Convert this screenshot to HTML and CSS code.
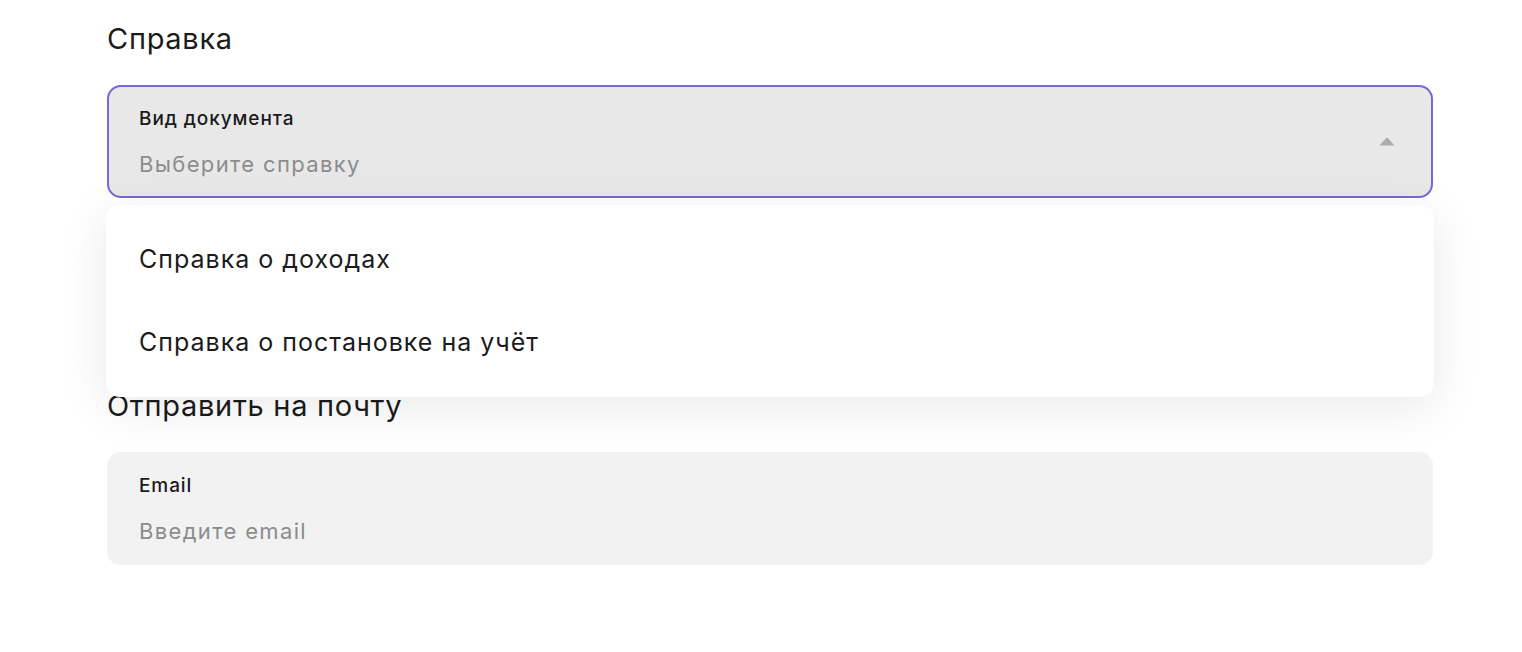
FILE: index.html
```html
<!DOCTYPE html>
<html lang="ru">
<head>
<meta charset="utf-8">
<link rel="stylesheet" href="styles.css">
</head>
<body>
<main class="page">
  <section class="group">
    <h2 class="title">Справка</h2>
    <div class="select-wrap">
      <div class="field field--active">
        <div class="field__text">
          <span class="field__label">Вид документа</span>
          <span class="field__placeholder">Выберите справку</span>
        </div>
        <svg class="field__arrow" width="16" height="9" viewBox="0 0 16 9"><path d="M0.5 8.5 L6.8 1.4 Q8 0.2 9.2 1.4 L15.5 8.5 Z" fill="#ababab"/></svg>
      </div>
      <ul class="menu">
        <li class="menu__item">Справка о доходах</li>
        <li class="menu__item">Справка о постановке на учёт</li>
      </ul>
    </div>
  </section>
  <section class="group group--second">
    <h2 class="title">Отправить на почту</h2>
    <div class="field field--plain">
      <div class="field__text">
        <span class="field__label">Email</span>
        <span class="field__placeholder">Введите email</span>
      </div>
    </div>
  </section>
</main>
</body>
</html>
```
FILE: styles.css
```css
* { box-sizing: border-box; }
html, body { margin: 0; padding: 0; background: #fff; }
body {
  font-family: Inter, "Noto Sans", "Liberation Sans", sans-serif;
  color: #1b1b1b;
}
.page {
  width: 1326px;
  margin-left: 107px;
  padding-top: 20px;
  display: flex;
  flex-direction: column;
}
.group { display: flex; flex-direction: column; }
.group--second { margin-top: 189px; }
.title {
  margin: 0 0 27px 0;
  font-size: 29px;
  line-height: 38px;
  font-weight: 400;
  letter-spacing: 0.7px;
  color: #1b1b1b;
}
.select-wrap { position: relative; }
.field {
  height: 113px;
  border-radius: 14px;
  display: flex;
  align-items: center;
  justify-content: space-between;
  padding: 0 36px 0 32px;
}
.field--active {
  background: #e8e8e8;
  border: 2px solid #7b67d6;
  padding-left: 30px;
  padding-right: 36px;
}
.field--plain {
  background: #f2f2f2;
}
.field__text {
  display: flex;
  flex-direction: column;
  gap: 20px;
  padding-top: 3px;
}
.field__label {
  font-size: 19px;
  line-height: 22px;
  font-weight: 500;
  letter-spacing: 0.9px;
  color: #1b1b1b;
}
.field__placeholder {
  font-size: 22px;
  line-height: 28px;
  letter-spacing: 1.35px;
  color: #8c8c8c;
}
.menu {
  position: absolute;
  left: -1px;
  right: -1px;
  top: 120px;
  margin: 0;
  padding: 12px 0 14px;
  list-style: none;
  background: #fff;
  border-radius: 14px;
  box-shadow: 0 10px 50px rgba(0,0,0,0.09);
  z-index: 2;
}
.menu__item {
  height: 83px;
  display: flex;
  align-items: center;
  padding-left: 33px;
  font-size: 25px;
  letter-spacing: 1px;
  color: #1b1b1b;
}
```
